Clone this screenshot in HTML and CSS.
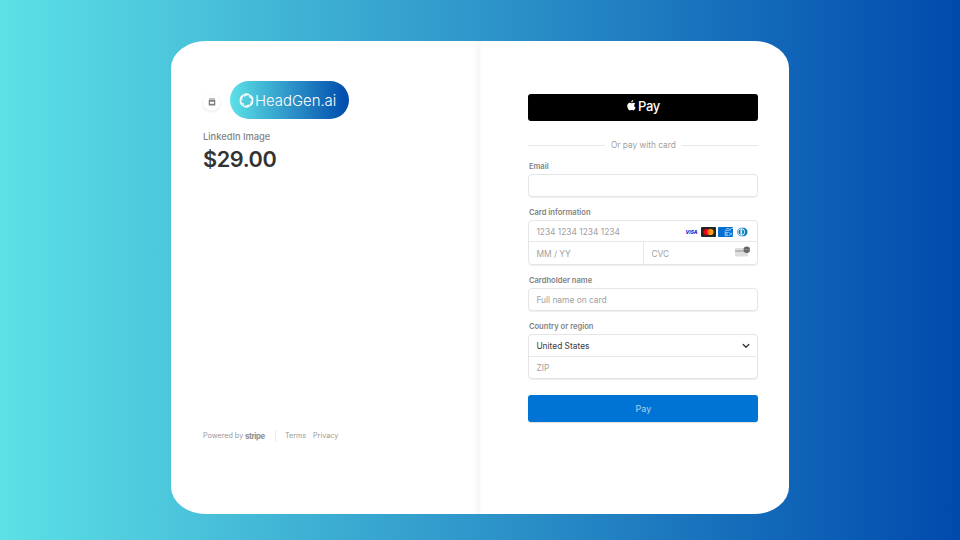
FILE: index.html
```html
<!DOCTYPE html>
<html lang="en">
<head>
<meta charset="utf-8">
<title>HeadGen.ai Checkout</title>
<link rel="stylesheet" href="styles.css">
</head>
<body>
<main class="checkout">
  <section class="summary">
    <header class="brand">
      <span class="store">
        <svg width="8" height="8" viewBox="0 0 8 8"><path fill="#808080" fill-rule="evenodd" d="M1 .5h6v1H1zM.7 1.900h6.600V7.500H.7zM2 3.800v2h4v-2z"/></svg>
      </span>
      <span class="logo">
        <svg width="15" height="15" viewBox="0 0 15 15" fill="none" stroke="#fff" stroke-width="1.15" stroke-linecap="round">
          <g id="blade"><path d="M4.300 2.200Q7.500-.2 10.300 1.900Q7.600 1.400 5.600 3.100"/></g>
          <use href="#blade" transform="rotate(60 7.5 7.5)"/>
          <use href="#blade" transform="rotate(120 7.5 7.5)"/>
          <use href="#blade" transform="rotate(180 7.5 7.5)"/>
          <use href="#blade" transform="rotate(240 7.5 7.5)"/>
          <use href="#blade" transform="rotate(300 7.5 7.5)"/>
        </svg>
        <span class="logo-name">HeadGen.ai</span>
      </span>
    </header>
    <div class="product">LinkedIn Image</div>
    <div class="price">$29.00</div>
    <footer class="footer">
      <span class="powered">Powered by</span><b class="stripe">stripe</b>
      <span class="links"><span class="terms">Terms</span><span>Privacy</span></span>
    </footer>
  </section>
  <section class="payment">
    <div class="apple-pay">
      <svg width="9" height="11" viewBox="0 0 18 22" fill="#fff"><path d="M12.4 0c.2 2.200-1.700 4.600-4 4.600C8.200 2.500 10.200.3 12.400 0zM16.500 7.200c-3.300 2.300-2.500 6.600.8 8-.8 2.300-2.500 5.600-4.500 5.600-1.400 0-1.800-.8-3.500-.8s-2.200.8-3.500.8C2.700 20.800-.9 13 1 8.800c1.400-3.300 4.500-4 6.500-3 1.300.6 2 .6 3.300 0 2-.9 4.500-.3 5.700 1.400z"/></svg>
      <span>Pay</span>
    </div>
    <div class="divider">Or pay with card</div>
    <div class="label">Email</div>
    <div class="field"></div>
    <div class="label">Card information</div>
    <div class="group">
      <div class="row number">
        <span>1234 1234 1234 1234</span>
        <span class="cards">
          <svg width="15" height="10" viewBox="0 0 15 10"><rect x=".25" y=".25" width="14.500" height="9.500" rx="1" fill="#fff" stroke="#f3f3f6" stroke-width=".5"/><text x="1.500" y="7" class="visa" textLength="12" lengthAdjust="spacingAndGlyphs">VISA</text></svg>
          <svg width="15" height="10" viewBox="0 0 15 10"><rect width="15" height="10" rx="1" fill="#252525"/><circle cx="5.500" cy="5" r="3.100" fill="#eb001b"/><circle cx="9.500" cy="5" r="3.100" fill="#f79e1b"/><path d="M7.500 2.600a3.100 3.100 0 0 1 0 4.800a3.100 3.100 0 0 1 0-4.800" fill="#ff5f00"/></svg>
          <svg width="15" height="10" viewBox="0 0 15 10"><rect width="15" height="10" rx=".8" fill="#016fd0"/><path d="M7 4.700L8.800 1.500h2l1.200 2 .9-2H15M8.500 3.500h2.500M7 5.400h3.500M7 7h3M7 8.600h3.500M7.100 5.400v3.200M11 5.400l3.500 3.200M14.500 5.400L11 8.600" stroke="#cfe6fa" stroke-width=".7" fill="none"/></svg>
          <svg width="15" height="10" viewBox="0 0 15 10"><rect x=".25" y=".25" width="14.500" height="9.500" rx="1" fill="#fff" stroke="#f3f3f6" stroke-width=".5"/><path d="M6.300 .8h2a4.200 4.200 0 0 1 0 8.400h-2a4.200 4.200 0 0 1 0-8.400z" fill="#0079be"/><circle cx="6.300" cy="5" r="3.700" fill="#d9ecf8"/><path d="M5.400 2.300v5.400a2.900 2.900 0 0 1 0-5.400M7.200 2.300v5.400a2.900 2.900 0 0 0 0-5.400" fill="#0079be"/></svg>
        </span>
      </div>
      <div class="split">
        <div class="row">MM / YY</div>
        <div class="row cvc"><span>CVC</span>
          <svg width="15" height="11" viewBox="0 0 15 11"><rect y="2" width="13" height="8.500" rx="1" fill="#dedede"/><path d="M0 4.200h11v1.600H0z" fill="#aaa"/><circle cx="11.800" cy="3.700" r="3.200" fill="#666"/><path d="M9.800 3.700h4" stroke="#999" stroke-width="1" stroke-dasharray="1 .5"/></svg>
        </div>
      </div>
    </div>
    <div class="label">Cardholder name</div>
    <div class="field">Full name on card</div>
    <div class="label">Country or region</div>
    <div class="group">
      <div class="row country"><span>United States</span>
        <svg width="8" height="6" viewBox="0 0 8 6" fill="none" stroke="#333" stroke-width="1.300" stroke-linecap="round" stroke-linejoin="round"><path d="M1.200 1.500L4 4.300l2.800-2.800"/></svg>
      </div>
      <div class="row zip">ZIP</div>
    </div>
    <div class="pay">Pay</div>
  </section>
</main>
</body>
</html>
```
FILE: styles.css
```css
* { box-sizing: border-box; }
body {
  margin: 0;
  width: 960px;
  height: 540px;
  padding: 41px 171px 26px;
  background: linear-gradient(90deg, #5ce1e6, #004aad);
  font-family: Inter, sans-serif;
  color: #8a8a8a;
  overflow: hidden;
}
.checkout {
  display: flex;
  width: 618px;
  height: 473px;
  background: #fff;
  border-radius: 35px / 27px;
  overflow: hidden;
}
.summary {
  display: flex;
  flex-direction: column;
  width: 310px;
  padding: 39px 0 0 32px;
  background: linear-gradient(90deg, transparent 301px, #f7f7f7 309px, #fff 310px);
}
.brand { display: flex; align-items: center; height: 40px; }
.store {
  display: flex;
  align-items: center;
  justify-content: center;
  width: 17px;
  height: 17px;
  margin-top: 4px;
  border-radius: 50%;
  box-shadow: 0 1px 3px #0000001c;
}
.logo {
  display: flex;
  align-items: center;
  width: 119px;
  height: 38px;
  margin-left: 10.400px;
  padding-left: 8.600px;
  border-radius: 19px;
  background: linear-gradient(90deg, #5ce1e6, #004aad);
}
.logo-name {
  margin: 1px 0 0 1px;
  font: 300 14.900px/20px Inter, sans-serif;
  color: #fff;
  white-space: nowrap;
}
.product { margin-top: 10px; font-size: 9.300px; font-weight: 500; line-height: 14px; color: #838383; }
.price { margin-top: 2px; font-size: 21.700px; font-weight: 600; line-height: 27px; letter-spacing: -.4px; color: #333; }
.footer { display: flex; align-items: center; height: 12px; margin-top: 257px; font-size: 7.200px; line-height: 12px; color: #999; }
.powered { width: 42px; white-space: nowrap; }
.stripe { width: 30px; font-size: 7.800px; line-height: 11px; font-weight: 800; letter-spacing: -.5px; color: #999; }
.links { display: flex; padding-left: 9px; border-left: 1px solid #ececec; }
.terms { width: 28px; }
.payment { width: 230px; margin-left: 47.400px; padding-top: 52.500px; }
.apple-pay {
  display: flex;
  justify-content: center;
  gap: 2px;
  height: 27px;
  padding-top: 6px;
  border-radius: 3px;
  background: #000;
  color: #fff;
  font-size: 13px;
  font-weight: 500;
  line-height: 13px;
  letter-spacing: -.4px;
}
.divider { display: flex; align-items: center; gap: 6px; height: 12px; margin: 18.500px 0 10px; font-size: 8.300px; color: #a0a0a0; white-space: nowrap; }
.divider::before, .divider::after { content: ""; flex: 1; height: 1px; background: #e9e9e9; }
.label { height: 12px; margin-bottom: 1px; padding-left: .5px; font-size: 7.600px; font-weight: 600; line-height: 12px; color: #828282; }
.field, .group {
  border: 1px solid #e5e5e5;
  border-radius: 4px;
  box-shadow: 0 1px 1px #00000012;
  font-size: 8.400px;
  color: #a0a0a0;
}
.field { height: 23px; margin-bottom: 10px; padding: 0 7px; line-height: 22px; }
.group { height: 45px; margin-bottom: 10px; }
.row { display: flex; align-items: center; height: 22px; padding: 0 7px; }
.number, .country { border-bottom: 1px solid #e8e8e8; justify-content: space-between; }
.number { height: 21px; padding-top: 1px; }
.split .row { padding-top: 1px; }
.cards { display: flex; gap: 2px; }
.visa { font: italic 800 5.200px Inter, sans-serif; fill: #1724d1; }
.split { display: grid; grid-template-columns: 114px 1fr; }
.cvc { justify-content: space-between; border-left: 1px solid #e8e8e8; }
.cvc svg { margin-top: -5px; }
.country { color: #3d3d3d; }
.pay {
  height: 27px;
  margin-top: 16px;
  border-radius: 3px;
  background: #0074d4;
  box-shadow: 0 1px 1px #00000022;
  text-align: center;
  font-size: 9px;
  line-height: 27px;
  color: #a9d1f1;
}
```
